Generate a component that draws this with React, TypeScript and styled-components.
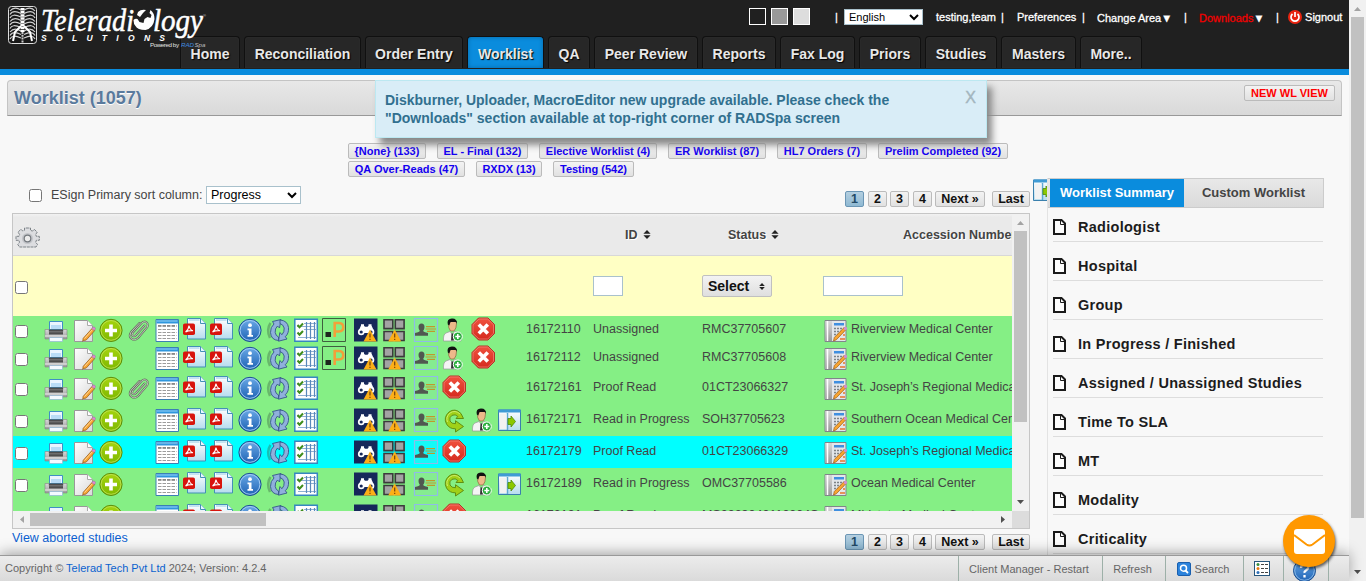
import React from 'react';
import styled, { createGlobalStyle, css } from 'styled-components';

const Global = createGlobalStyle`
  * { box-sizing: border-box; }
  html, body { margin: 0; padding: 0; overflow: hidden; background: #f8f8f8; }
  body { font-family: Arial, "Liberation Sans", sans-serif; font-size: 12.5px; color: #444; }
  svg { display: block; flex: none; }
  input, select, button { font-family: inherit; margin: 0; }
`;

/* ---------- page frame ---------- */

const Frame = styled.div`
  display: flex;
  width: 1366px;
  height: 581px;
  overflow: hidden;
`;
const Page = styled.div`
  position: relative;
  display: flex;
  flex-direction: column;
  width: 1349px;
  height: 581px;
`;
const Header = styled.header`
  flex: none;
  height: 75px;
  background: #202020;
  border-bottom: 6px solid #0a8cdd;
`;
const Content = styled.main`
  flex: 1;
  min-height: 0;
  overflow: hidden;
  padding-top: 5px;
`;

/* ---------- header ---------- */

const UserBar = styled.div`
  display: flex;
  align-items: center;
  height: 36px;
  padding: 0 0 2px 749px;
  color: #fff;
  font-size: 11px;
  white-space: nowrap;
`;
const Swatch = styled.span<{ $color: string }>`
  flex: none;
  width: 17px;
  height: 17px;
  margin: 0 5px 1px 0;
  border: 1px solid #fff;
  background: ${(p) => p.$color};
`;
const BarItem = styled.span<{ $w: number; $color?: string; $down?: boolean }>`
  flex: none;
  width: ${(p) => p.$w}px;
  color: ${(p) => p.$color || '#fff'};
  -webkit-text-stroke: 0.3px currentColor;
  ${(p) => p.$down && css`padding-top: 2px;`}
`;
const White = styled.span`
  color: #fff;
`;
const LanguageSelect = styled.select`
  flex: none;
  width: 79px;
  height: 16px;
  margin-right: 13px;
  padding: 0;
  border: 1px solid #a9c1cc;
  background: #fff;
  color: #000;
  font-size: 11px;
`;
const Nav = styled.nav`
  display: flex;
  gap: 4px;
  height: 33px;
  padding-left: 180px;
`;
const NavTab = styled.a<{ $w: number; $active?: boolean }>`
  flex: none;
  width: ${(p) => p.$w}px;
  height: 32px;
  border: 1px solid #101010;
  border-bottom: 0;
  border-radius: 4px 4px 0 0;
  background: ${(p) => (p.$active ? '#0a8cdd' : '#272727')};
  box-shadow: ${(p) => (p.$active ? 'inset 0 0 4px #0567a5' : 'inset 0 0 2px #333')};
  color: #e8e8e8;
  font-size: 14px;
  font-weight: bold;
  line-height: 34px;
  text-align: center;
  text-shadow: 1px 1px 1px #000;
  white-space: nowrap;
`;
const LogoSpot = styled.div`
  position: absolute;
  left: 0;
  top: 0;
  z-index: 2;
`;

/* ---------- title, notice, filters ---------- */

const TitleBar = styled.div`
  display: flex;
  justify-content: space-between;
  width: 1335px;
  height: 36px;
  margin-left: 7px;
  padding: 0 6px;
  border: 1px solid #c4c4c4;
  border-bottom: 1px solid #999;
  border-radius: 4px 4px 0 0;
  background: linear-gradient(#e8e8e8, #d9d9d9);
`;
const Title = styled.h1`
  margin: 0;
  color: #5a7a9d;
  font-size: 18px;
  line-height: 35px;
  text-shadow: 0 1px 0 #fff;
`;
const chip = css`
  border: 1px solid #bbb;
  border-radius: 2px;
  background: linear-gradient(#f3f3f3, #e1e1e1);
  font-weight: bold;
  text-align: center;
  white-space: nowrap;
`;
const NewView = styled.a`
  ${chip}
  width: 91px;
  height: 16px;
  margin-top: 4px;
  color: #f00;
  font-size: 11px;
  line-height: 15px;
`;
const Notice = styled.div`
  position: absolute;
  left: 375px;
  top: 80px;
  z-index: 3;
  display: flex;
  justify-content: space-between;
  width: 612px;
  height: 58px;
  padding: 10px 10px 0 9px;
  border: 1px solid #bce8f1;
  background: #d9edf7;
  box-shadow: 5px 7px 7px #888;
  color: #31708f;
  font-size: 14px;
  font-weight: bold;
  line-height: 18px;
  white-space: nowrap;
`;
const CloseMark = styled.span`
  margin-top: -2px;
  color: #a3b5be;
  font-size: 16px;
  font-weight: normal;
  -webkit-text-stroke: 0.4px currentColor;
`;
const Filters = styled.div`
  display: flex;
  flex-wrap: wrap;
  align-content: flex-start;
  gap: 2px 11px;
  width: 1040px;
  height: 62px;
  padding: 27px 20px 0 348px;
`;
const FilterChip = styled.a<{ $w: number }>`
  ${chip}
  flex: none;
  width: ${(p) => p.$w}px;
  height: 16px;
  color: #1400f0;
  font-size: 11px;
  line-height: 15px;
`;

/* ---------- worklist ---------- */

const Columns = styled.div`
  display: flex;
`;
const Left = styled.section`
  flex: none;
  width: 1018px;
  margin-left: 12px;
`;
const Toolbar = styled.div`
  display: flex;
  align-items: center;
  height: 35px;
  padding-left: 17px;
  white-space: nowrap;
`;
const Check = styled.input.attrs({ type: 'checkbox' })`
  flex: none;
  width: 13px;
  height: 13px;
`;
const SortLabel = styled.span`
  width: 155px;
  margin: -2px 0 0 9px;
`;
const SortSelect = styled.select`
  width: 95px;
  height: 18px;
  margin-top: -1px;
  padding: 0;
  border: 1px solid #a9c1cc;
  background: #fff;
  color: #000;
  font-size: 12.5px;
`;
const Pager = styled.div`
  display: flex;
  margin: 5px 0 0 auto;
  ${Toolbar} & { margin-top: 7px; }
`;
const PageButton = styled.a<{ $w: number; $gap?: number; $active?: boolean }>`
  ${chip}
  width: ${(p) => p.$w}px;
  height: 16px;
  margin-left: ${(p) => p.$gap ?? 4}px;
  color: #111;
  font-size: 12.5px;
  line-height: 14px;
  ${(p) =>
    p.$active &&
    css`
      border-color: #6b96b5;
      background: linear-gradient(#b4cfe0, #8fb9d3);
      color: #224a66;
    `}
`;
const TableBox = styled.div`
  display: grid;
  grid-template-columns: 999px 17px;
  grid-template-rows: 297px 17px;
  border: 1px solid #c6c6c6;
`;
const Table = styled.div`
  overflow: hidden;
  white-space: nowrap;
`;
const HeadRow = styled.div`
  display: flex;
  align-items: center;
  height: 42px;
  padding-left: 2px;
  border-bottom: 1px solid #d8d8d8;
  background: linear-gradient(#f2f2f2, #eaeaea 8%);
  font-weight: bold;
`;
const HeadCell = styled.span<{ $w: number }>`
  flex: none;
  display: flex;
  align-items: center;
  gap: 5px;
  width: ${(p) => p.$w}px;
  text-shadow: 1px 1px 0 #fff;
`;
const GearSlot = styled.span`
  flex: none;
  width: 610px;
  padding-top: 7px;
`;
const FilterRow = styled.div`
  display: flex;
  align-items: center;
  height: 60px;
  padding-left: 2px;
  background: #ffffc4;
`;
const FilterCheck = styled(Check)`
  margin: 2px 565px 0 0;
`;
const FilterInput = styled.input<{ $w: number; $gap: number }>`
  width: ${(p) => p.$w}px;
  height: 20px;
  margin-right: ${(p) => p.$gap}px;
  border: 1px solid #a9c1cc;
  background: #fff;
`;
const SelectButton = styled.div`
  display: flex;
  align-items: center;
  justify-content: space-between;
  width: 70px;
  height: 22px;
  margin-right: 51px;
  padding: 0 6px 0 5px;
  border: 1px solid #c0c0c0;
  border-radius: 2px;
  background: linear-gradient(#f3f3f3, #dfdfdf);
  color: #111;
  font-size: 14px;
  font-weight: bold;
`;
const StudyRow = styled.div<{ $h: number; $selected?: boolean }>`
  display: grid;
  grid-template-columns:
    31px 29px 26px 28px 28px 28px 27px 28px 29px 27px 28px 32px 29px 31px 28px
    29px 26px 29px 67px 109px 122px 27px 240px;
  align-items: center;
  height: ${(p) => p.$h}px;
  background: ${(p) => (p.$selected ? '#0ff' : '#85ef85')};
`;
const RowCheck = styled(Check)`
  margin: 3px 0 0 2px;
`;
const TextCell = styled.span<{ $lift?: number }>`
  padding-bottom: ${(p) => p.$lift ?? 2}px;
`;
const Below = styled.div`
  display: flex;
  height: 26px;
`;
const AbortedLink = styled.a`
  color: #0b5fd0;
  line-height: 18px;
`;

/* ---------- scrollbars ---------- */

const PageScroll = styled.div`
  display: flex;
  flex-direction: column;
  align-items: center;
  width: 17px;
  background: #f1f1f1;
`;
const VScroll = styled.div`
  display: flex;
  flex-direction: column;
  align-items: center;
  background: #f1f1f1;
`;
const HScroll = styled.div`
  display: flex;
  align-items: center;
  background: #f1f1f1;
`;
const Corner = styled.div`
  background: #dcdcdc;
`;
const ScrollEnd = styled.span<{ $dir: 'up' | 'down' | 'left' | 'right' }>`
  flex: none;
  display: flex;
  align-items: center;
  justify-content: center;
  width: 17px;
  height: 17px;
  color: ${(p) => (p.$dir === 'up' || p.$dir === 'left' ? '#a3a3a3' : '#505050')};
  transform: rotate(${(p) => ({ up: 0, right: 90, down: 180, left: 270 })[p.$dir]}deg);
`;
const Thumb = styled.span<{ $w: number; $h: number }>`
  width: ${(p) => p.$w}px;
  height: ${(p) => p.$h}px;
  background: #c1c1c1;
`;
const Spring = styled.span`
  flex: 1;
`;

/* ---------- summary panel ---------- */

const ToggleSlot = styled.div`
  flex: none;
  width: 15px;
  height: 24px;
  margin-left: 2px;
  overflow: hidden;
`;
const Summary = styled.aside`
  width: 277px;
  border-left: 1px solid #e3e3e3;
`;
const SummaryTabs = styled.div`
  display: flex;
  height: 30px;
  padding-left: 2px;
  border: 1px solid #ccc;
  border-left: 0;
  background: linear-gradient(#e8e8e8, #dadada);
  font-size: 13px;
  font-weight: bold;
  line-height: 27px;
  text-align: center;
`;
const SummaryTab = styled.a<{ $active?: boolean }>`
  width: ${(p) => (p.$active ? 134 : 139)}px;
  color: ${(p) => (p.$active ? '#fff' : '#444')};
  background: ${(p) => (p.$active ? '#0a8cdd' : 'transparent')};
`;
const SummaryItem = styled.div`
  display: flex;
  align-items: center;
  gap: 12px;
  width: 270px;
  height: 39px;
  margin-left: 5px;
  padding: 9px 0 0 0;
  border-bottom: 1px solid #ddd;
  color: #1c1c1c;
  font-size: 14.5px;
  font-weight: bold;
  letter-spacing: 0.28px;
  white-space: nowrap;
  &:nth-child(2) { height: 34px; padding-top: 4px; }
`;

/* ---------- footer ---------- */

const Footer = styled.footer`
  position: relative;
  z-index: 2;
  flex: none;
  display: flex;
  height: 26px;
  padding-left: 5px;
  border-top: 1px solid #999;
  background: linear-gradient(#ececec, #dadada);
  box-shadow: 0 -2px 14px rgba(0, 0, 0, 0.35);
  color: #666;
  font-size: 11px;
  line-height: 24px;
  white-space: nowrap;
`;
const Copyright = styled.span`
  width: 953px;
`;
const CompanyLink = styled.a`
  color: #0b62cf;
`;
const FooterItem = styled.span<{ $w: number; $low?: boolean }>`
  display: flex;
  align-items: center;
  justify-content: center;
  gap: 4px;
  width: ${(p) => p.$w}px;
  padding: ${(p) => (p.$low ? '4px 3px 0 0' : '0 3px 0 0')};
  border-left: 1px solid #9db0a8;
`;
const MailButton = styled.div`
  position: absolute;
  left: 1283px;
  top: 515px;
  z-index: 4;
  display: flex;
  align-items: center;
  justify-content: center;
  width: 52px;
  height: 52px;
  border-radius: 50%;
  background: #ff9800;
  box-shadow: 1px 2px 3px rgba(0, 0, 0, 0.6);
`;

/* ---------- icons ---------- */

const Ico = ({ children, dx = 0, dy = 0 }: { children: React.ReactNode; dx?: number; dy?: number }) => (
  <svg width="24" height="24" viewBox={`${-dx} ${-dy} 24 24`} overflow="visible">{children}</svg>
);

const Defs = () => (
  <svg width="0" height="0" style={{ position: 'absolute' }}>
    <defs>
      <linearGradient id="blue" x2="0" y2="1"><stop offset="0" stopColor="#6aa9e6" /><stop offset="1" stopColor="#1f63b5" /></linearGradient>
      <linearGradient id="lime" x2="0" y2="1"><stop offset="0" stopColor="#a5d40f" /><stop offset="1" stopColor="#7fb800" /></linearGradient>
      <linearGradient id="red" x2="0" y2="1"><stop offset="0" stopColor="#f0523f" /><stop offset="1" stopColor="#d52a1f" /></linearGradient>
      <linearGradient id="paper" x2="1" y2="1"><stop offset="0" stopColor="#fff" /><stop offset="1" stopColor="#d9d9d9" /></linearGradient>
      <linearGradient id="ice" x2="0" y2="1"><stop offset="0" stopColor="#fff" /><stop offset="1" stopColor="#b5dcee" /></linearGradient>
      <linearGradient id="steel" x2="0" y2="1"><stop offset="0" stopColor="#d8d8d8" /><stop offset="1" stopColor="#9a9a9a" /></linearGradient>
    </defs>
  </svg>
);

const Printer = () => (
  <Ico>
    <path d="M5.500 3.500h13v8h-13z" fill="#eaf5ff" stroke="#3f8fc5" />
    <path d="M7 7h10v4H7z" fill="#b9dcf7" />
    <path d="M1 11.500h4v2h14v-2h4v9.500H1z" fill="url(#steel)" stroke="#858585" strokeWidth=".6" />
    <path d="M5 11.500h14v5H5z" fill="#4d4d4d" />
    <path d="M5 13h14v1.500H5z" fill="#6d6d6d" />
    <path d="M1 17.500h22v1H1z" fill="#eee" />
    <path d="M5.500 19.500h13v4h-13z" fill="#f4faff" stroke="#8fb6d4" strokeWidth=".7" />
  </Ico>
);
const EditPage = () => (
  <Ico>
    <path d="M1.500 2.500h13l5 5v16h-18z" fill="url(#paper)" stroke="#999" />
    <path d="M14.500 2.500v5h5" fill="#fff" stroke="#aaa" />
    <path d="M10.500 22.500l-.8.800.5-3 9-10 2.500 2.300-8.500 9.500z" fill="#f8a532" stroke="#8e5512" strokeWidth=".7" />
    <path d="M11.500 20.500l8-9" stroke="#ffd699" />
    <path d="M18.800 10.600l1.300-1.400q1-.6 1.800.2t.3 1.900l-1.200 1.300z" fill="#e28ad0" stroke="#96669a" strokeWidth=".5" />
  </Ico>
);
const Plus = () => (
  <Ico>
    <circle cx="12" cy="12.400" r="11.100" fill="url(#lime)" stroke="#5d8d0a" />
    <circle cx="12" cy="12.400" r="9.900" fill="none" stroke="#c3e35c" strokeWidth=".8" />
    <path d="M12 6.500v12M6 12.500h12" stroke="#fff" strokeWidth="3.600" />
  </Ico>
);
const clipPath = 'M17.500 7.500l-8.500 9.500q-2 2-3.300.8t.2-3.300L14.500 5q2.800-2.500 5-.8t.8 5L11.500 19.500q-3.800 3.800-7 1.300t-.6-6.500L12.500 5';
const Clip = () => (
  <Ico>
    <g fill="none" strokeLinecap="round" strokeLinejoin="round">
      <path d={clipPath} stroke="#66705f" strokeWidth="2" />
      <path d={clipPath} stroke="#c3c9c0" strokeWidth=".9" />
    </g>
  </Ico>
);
const Sheet = () => (
  <Ico>
    <path d="M1 1.500h22.500v22H1z" fill="#fff" stroke="#3a7fb4" />
    <path d="M1.500 2h21.500v3.500H1.500z" fill="#2e96dd" />
    <path d="M2 2.500h20.500v1H2z" fill="#9bd2f5" />
    <g stroke="#9c9c9c" strokeWidth="1.200" strokeDasharray="3.500 1">
      <path d="M3 8.500h18.500M3 11.500h18.500M3 14.500h18.500M3 17.500h18.500M3 20.500h18.500" />
    </g>
    <path d="M3 7.500h18.500" stroke="#555" strokeWidth=".7" strokeDasharray="3.500 1" />
  </Ico>
);
const Pdf = () => (
  <Ico>
    <path d="M4.500.500h13l5 5v15.500h-18z" fill="url(#ice)" stroke="#4390b5" />
    <path d="M17.500.500v5h5" fill="#e8f7ff" stroke="#4390b5" />
    <path d="M6 2h10.500" stroke="#8fcae6" />
    <rect x="0" y="5.500" width="12" height="11.500" rx="1.800" fill="#d8140d" />
    <path d="M2.500 14q3-2 3.500-6.500.8 4.500 4 5.200-4-.5-7.500 1.300" fill="none" stroke="#fff" strokeWidth="1.100" />
  </Ico>
);
const Info = () => (
  <Ico>
    <circle cx="12" cy="12.400" r="11.100" fill="url(#blue)" stroke="#1b4f91" />
    <circle cx="12" cy="12.400" r="9.900" fill="none" stroke="#a9d0f5" strokeWidth=".9" />
    <circle cx="12" cy="7.200" r="1.900" fill="#fff" />
    <path d="M9.500 10.500h4v6.500h1.500v1.700H9.500V17h1.300v-4.800H9.500z" fill="#fff" />
  </Ico>
);
const Sync = () => (
  <Ico>
    <path d="M3.500 5Q-1 12 3 20" stroke="#3c6343" strokeWidth="2.500" opacity=".4" fill="none" />
    <path d="M11.500 22.500Q4 22 3.500 14.500 3.300 9 7 6L5.500 3.500l8.500-2-1.500 8.500-2-2Q7.800 10.500 8.200 14.500 8.800 18 11.500 19z" fill="#8fb0dc" stroke="#34558a" strokeWidth=".9" />
    <path d="M13 2Q20.500 2.500 21.500 9.500q.5 6-3.200 9.200l1.700 2.300-8.500 2.200 1.300-8.700 2.200 2.200q2.500-2.700 2.200-6.700Q16.300 6.500 13 5.500z" fill="#8fb0dc" stroke="#34558a" strokeWidth=".9" />
  </Ico>
);
const Checklist = () => (
  <Ico>
    <path d="M.8 1.300h22.500v22H.8z" fill="#fff" stroke="#3687c0" strokeWidth="1.500" />
    <path d="M10 5.500h12M10 11.500h12M4 19.500h18M3 8.500h18" stroke="#8fb0d3" />
    <path d="M12.500 4v17M16.500 4v17M20.500 4v17" stroke="#5a88bb" strokeWidth="1.200" />
    <path d="M3.500 7l2 2.200L9 5.500M3.500 14.500l2 2.200 3.500-3.700" fill="none" stroke="#3f8d1b" strokeWidth="2" />
  </Ico>
);
const PBadge = () => (
  <Ico>
    <path d="M.500.500h23v23H.500z" fill="none" stroke="#3f5f3f" />
    <path d="M3.500 14h5.500v5H3.500z" fill="#1d261d" />
    <path d="M12.700 19V5h4.300q4.300.2 4.300 4.300T17 13.500h-4.300" fill="none" stroke="#f3a03a" strokeWidth="2.600" />
  </Ico>
);
const Warn = ({ x, y }: { x: number; y: number }) => (
  <g transform={`translate(${x} ${y})`}>
    <path d="M6.500 0L13 12H0z" fill="#fcaf17" />
    <path d="M6.500 4v4M6.500 9.300v1.200" stroke="#75420b" strokeWidth="1.200" />
  </g>
);
const Binoculars = () => (
  <Ico>
    <path d="M0 .5h23.500v23H0z" fill="#16285a" />
    <path d="M5 12l2-4.500V6.300h3v1.400l1 1h2.500l1-1V6.300h3v1.200l2 4.500-2 3H7z" fill="#fff" />
    <circle cx="7.200" cy="14" r="3.300" fill="#fff" /><circle cx="7.200" cy="14" r="1.600" fill="#16285a" />
    <circle cx="17" cy="14" r="3.300" fill="#fff" /><circle cx="17" cy="14" r="1.600" fill="#16285a" />
    <Warn x={9.500} y={11.500} />
  </Ico>
);
const Tiles = () => (
  <Ico>
    <g fill="#a3a3a3" stroke="#3b3b3b" strokeWidth="1.600">
      <path d="M1 1.800h8.800v8.800H1zM12.300 1.800h8.800v8.800h-8.800zM1 13.500h8.800v9H1zM12.300 13.500h8.800v9h-8.800z" />
    </g>
    <Warn x={5.200} y={11.500} />
  </Ico>
);
const Card = () => (
  <Ico>
    <path d="M.500.500h23v23H.500z" fill="#85dcd0" fillOpacity=".15" stroke="#8fbbe8" strokeWidth="1.200" />
    <path d="M7.500 5.500q3 0 3 3.500 0 2.500-1.300 3.700.2 1.300 4.800 2.300v2.800H1V15q4.600-1 4.800-2.300Q4.500 11.500 4.500 9q0-3.500 3-3.500z" fill="#505850" />
    <path d="M12 8.600h9M11.500 11h10.500M13 13.400h8" stroke="#bf9a2c" strokeWidth="1.200" />
  </Ico>
);
const Person = () => (
  <Ico dx={1}>
    <path d="M9 3q4-1.500 4.500 2.500 0 5-2.500 7.500H7.500Q5 10 5.500 5z" fill="#edb98a" stroke="#7b5431" strokeWidth=".6" />
    <path d="M4.800 6.500Q3.500.500 9 .500t5 5.500l-1-2H7.500l-1.200 3.500z" fill="#111" />
    <path d="M.5 23q-.5-6.500 2.500-8l4-1.500 2.500 3 2-3 3.500 1q3 1.500 3 8.500z" fill="#f4f4f4" stroke="#9a9a9a" strokeWidth=".7" />
    <path d="M8.500 15.500h1.700l.6 7H8z" fill="#333" />
    <circle cx="14.800" cy="18.500" r="4.500" fill="#2cae3e" stroke="#fff" strokeWidth="1" />
    <path d="M14.800 16v5M12.300 18.500h5" stroke="#fff" strokeWidth="1.600" />
  </Ico>
);
const Stop = () => (
  <Ico dx={0.500} dy={-1}>
    <path d="M7 1h9.500l6.500 6.500v9l-6.500 6.500H7L.5 16.500v-9z" fill="url(#red)" stroke="#b43227" />
    <path d="M7.500 2h8.700l5.800 5.800v8.500L16.200 22H7.500l-6-5.700V7.800z" fill="none" stroke="#f59187" strokeWidth=".6" />
    <path d="M7.300 7.500l9 9M16.300 7.500l-9 9" stroke="#fff" strokeWidth="3.600" />
  </Ico>
);
const Undo = () => (
  <Ico dx={1}>
    <path d="M20.500 10.500L18 5.500Q12-.5 6 4 0 9.500 3.500 16q3 5 9 4.800V24l8-5.500-8-5.800v3q-4 .3-5.500-2.700Q5.800 9.500 9 7.300q3.500-1.500 5.800 1.200l-1.800 2z" fill="#a0d018" stroke="#5a870c" strokeWidth=".9" />
    <path d="M17 6Q12 1.500 7 5 2.500 9 4.500 14" fill="none" stroke="#cbec6a" />
  </Ico>
);
const Panes = () => (
  <Ico dx={1}>
    <path d="M.500 2h22v20.500H.500z" fill="url(#ice)" stroke="#3a80ad" />
    <path d="M.500 1.500h22v3H.500z" fill="#3f9bd5" />
    <path d="M9.500 5v17" stroke="#5ea7d0" strokeWidth="1.500" />
    <path d="M2 6h6.500v15H2z" fill="#f2f2f2" />
    <path d="M10 10.500h3V8l4.500 5.500L13 19v-2.500h-3z" fill="#8cc800" stroke="#4e8c0a" strokeWidth=".8" />
  </Ico>
);
const Facility = () => (
  <Ico>
    <path d="M1 2.500h21v21H1z" fill="#e3e6ea" stroke="#80858a" />
    <path d="M1.500 3h6.500v20H1.500z" fill="url(#steel)" />
    <path d="M3.500 3v20" stroke="#fff" strokeWidth="1.500" />
    <path d="M10 5h10v2.500H10z" fill="#3f8fe0" />
    <path d="M10 10.500h10M10 13.500h10M10 16.500h6" stroke="#7d8388" strokeWidth="1.300" strokeDasharray="2 1" />
    <path d="M9.500 23l.8-3.500 10-10.200 2 2-10 10.500z" fill="#f8a532" stroke="#9e5c12" strokeWidth=".7" />
    <circle cx="21.500" cy="10.500" r="1.700" fill="#cf8fd0" />
    <path d="M16 21h5M19 17h2" stroke="#e8752d" strokeWidth="1.300" />
  </Ico>
);
const Gear = () => (
  <svg width="25" height="24" viewBox="0 0 25 24">
    <path d="M9.500 4.300V2h6v2.300l2 .8 1.700-1.800 3 2.800-1.500 2.400.6 1.800h3v4h-3l-.6 2 1.800 2.200-1.500 2.500H4.500L2.800 18.500l1.700-2.200-.6-2H1v-4h3l.6-1.800-1.600-2.400 3-2.800L7.700 5z" fill="#dcdde0" stroke="#7d8388" strokeDasharray="3 .7" />
    <circle cx="12.500" cy="12.500" r="5.500" fill="#c3c5c9" />
    <circle cx="12.500" cy="12.500" r="3.300" fill="#ececec" stroke="#74797e" strokeWidth="1.200" />
  </svg>
);
const SortMark = ({ size = 8 }: { size?: number }) => (
  <svg width={size} height={size + 1} viewBox="0 0 8 10"><path d="M4 0l4 4.200H0zM4 10L0 5.800h8z" fill="#222" /></svg>
);
const Doc = () => (
  <svg width="13" height="16" viewBox="0 0 13 16">
    <path d="M1 1h7.500L12 4.500V15H1z" fill="#fdfdfd" stroke="#1a1a1a" strokeWidth="2" />
    <path d="M7.500 1v4.500H12" fill="none" stroke="#1a1a1a" />
  </svg>
);
const Arrow = () => (
  <svg width="7" height="4" viewBox="0 0 7 4"><path d="M3.500 0L7 4H0z" fill="currentColor" /></svg>
);
const Power = () => (
  <svg width="14" height="14" viewBox="0 0 14 14">
    <circle cx="7" cy="7" r="7" fill="#e8230f" />
    <path d="M4.500 4a4 4 0 1 0 5 0M7 2v5" fill="none" stroke="#fff" strokeWidth="1.700" />
  </svg>
);

const ribs = [5, 8.5, 12, 15.500, 19, 22.500, 26, 29.500, 33];
const Logo = () => (
  <svg width="212" height="52" viewBox="0 0 212 52">
    <rect x="8.500" y="6.500" width="28" height="37" rx="3" fill="#181818" stroke="#ddd" />
    <path d="M22.500 8v24" stroke="#fff" strokeWidth="4" strokeDasharray="2.500 .6" />
    <path d="M22.500 32v11" stroke="#ccc" strokeWidth="2" strokeDasharray="2 .8" />
    <g fill="none" stroke="#d0d0d0" strokeWidth="1.200">
      {ribs.map((y, i) => (
        <path key={y} d={`M21 ${y + 5}Q${14 - (i % 3)} ${y + 1} 10 ${y + 6}M24 ${y + 5}Q${31 + (i % 3)} ${y + 1} 35 ${y + 6}`} />
      ))}
    </g>
    <path d="M21 26l-6 6-2 9M24 26l6 6 2 9" fill="none" stroke="#fff" strokeWidth="2" />
    <g fill="#fff" fontFamily="'Liberation Serif', serif" fontStyle="italic" fontSize="31.500" stroke="#fff" strokeWidth=".5">
      <text x="41" y="31" textLength="93" lengthAdjust="spacingAndGlyphs">Teleradi</text>
      <text x="153" y="31" textLength="50" lengthAdjust="spacingAndGlyphs">logy</text>
    </g>
    <circle cx="144" cy="20" r="10" fill="#202020" />
    <path d="M133.500 20q2-2 4-1l2 3 4 1 1-4 3-2 3 1 1-3-2-2 1-3q4 3 4 9-1 9-9 11-8 0-10-4-2-2-2-6zM138 12q3-3 8-2l-3 3-3 4-3-2z" fill="#fff" />
    <text x="203" y="17" fill="#ccc" fontSize="4" fontFamily="Liberation Sans">®</text>
    <text x="41" y="41" textLength="124" fill="#fff" fontFamily="Liberation Sans" fontStyle="italic" fontWeight="bold" fontSize="8.500">SOLUTIONS</text>
    <g fontFamily="Liberation Sans" fontSize="6.200">
      <text x="150" y="47" fill="#e4e4e4" textLength="29">Powered by</text>
      <text x="181" y="47" fill="#3f8be0" fontStyle="italic" textLength="13">RAD</text>
      <text x="194.500" y="47" fill="#bbb" fontStyle="italic" textLength="11">Spa</text>
    </g>
  </svg>
);

/* ---------- data ---------- */

const tabs: [string, number][] = [
  ['Home', 60], ['Reconciliation', 117], ['Order Entry', 98], ['Worklist', 77], ['QA', 42],
  ['Peer Review', 104], ['Reports', 74], ['Fax Log', 75], ['Priors', 62], ['Studies', 72],
  ['Masters', 75], ['More..', 62],
];
const filters: [string, number][] = [
  ['{None} (133)', 78], ['EL - Final (132)', 91], ['Elective Worklist (4)', 118], ['ER Worklist (87)', 98],
  ['HL7 Orders (7)', 90], ['Prelim Completed (92)', 130], ['QA Over-Reads (47)', 117], ['RXDX (13)', 66],
  ['Testing (542)', 81],
];
type Action = 'person' | 'stop' | 'undo' | 'panes';
interface Study {
  id: string; status: string; accession: string; facility: string; h: number;
  clip?: boolean; p?: boolean; selected?: boolean; actions: Action[];
}
const studies: Study[] = [
  { id: '16172110', status: 'Unassigned', accession: 'RMC37705607', facility: 'Riverview Medical Center', h: 28, clip: true, p: true, actions: ['person', 'stop'] },
  { id: '16172112', status: 'Unassigned', accession: 'RMC37705608', facility: 'Riverview Medical Center', h: 28, p: true, actions: ['person', 'stop'] },
  { id: '16172161', status: 'Proof Read', accession: '01CT23066327', facility: 'St. Joseph’s Regional Medical Center', h: 32, clip: true, actions: ['stop'] },
  { id: '16172171', status: 'Read in Progress', accession: 'SOH37705623', facility: 'Southern Ocean Medical Center', h: 32, actions: ['undo', 'person', 'panes'] },
  { id: '16172179', status: 'Proof Read', accession: '01CT23066329', facility: 'St. Joseph’s Regional Medical Center', h: 32, selected: true, actions: ['stop'] },
  { id: '16172189', status: 'Read in Progress', accession: 'OMC37705586', facility: 'Ocean Medical Center', h: 32, actions: ['undo', 'person', 'panes'] },
  { id: '16172191', status: 'Proof Read', accession: 'MS2023040112204S', facility: 'Midstate Medical Center', h: 32, actions: ['stop'] },
];
const summary = [
  'Radiologist', 'Hospital', 'Group', 'In Progress / Finished', 'Assigned / Unassigned Studies',
  'Time To SLA', 'MT', 'Modality', 'Criticality',
];

const ActionIcon = ({ kind }: { kind?: Action }) => {
  if (kind === 'person') return <Person />;
  if (kind === 'stop') return <Stop />;
  if (kind === 'undo') return <Undo />;
  if (kind === 'panes') return <Panes />;
  return <span />;
};

const Row = ({ s }: { s: Study }) => (
  <StudyRow $h={s.h} $selected={s.selected}>
    <RowCheck />
    <Printer />
    <EditPage />
    <Plus />
    {s.clip ? <Clip /> : <span />}
    <Sheet />
    <Pdf />
    <Pdf />
    <Info />
    <Sync />
    <Checklist />
    {s.p ? <PBadge /> : <span />}
    <Binoculars />
    <Tiles />
    <Card />
    <ActionIcon kind={s.actions[0]} />
    <ActionIcon kind={s.actions[1]} />
    <ActionIcon kind={s.actions[2]} />
    <TextCell>{s.id}</TextCell>
    <TextCell>{s.status}</TextCell>
    <TextCell>{s.accession}</TextCell>
    <Facility />
    <TextCell $lift={3}>{s.facility}</TextCell>
  </StudyRow>
);

const Pages = () => (
  <Pager>
    <PageButton $w={19} $active>1</PageButton>
    <PageButton $w={19}>2</PageButton>
    <PageButton $w={19} $gap={3}>3</PageButton>
    <PageButton $w={19}>4</PageButton>
    <PageButton $w={50} $gap={3}>Next »</PageButton>
    <PageButton $w={38} $gap={7}>Last</PageButton>
  </Pager>
);

export default function App() {
  return (
    <Frame>
      <Global />
      <Defs />
      <Page>
        <LogoSpot><Logo /></LogoSpot>
        <Header>
          <UserBar>
            <Swatch $color="#202020" />
            <Swatch $color="#999" />
            <Swatch $color="#ddd" />
            <BarItem $w={20} />
            <BarItem $w={9}>|</BarItem>
            <LanguageSelect><option>English</option></LanguageSelect>
            <BarItem $w={65}>testing,team</BarItem>
            <BarItem $w={16}>|</BarItem>
            <BarItem $w={65}>Preferences</BarItem>
            <BarItem $w={15}>|</BarItem>
            <BarItem $w={87} $down>Change Area▼</BarItem>
            <BarItem $w={15}>|</BarItem>
            <BarItem $w={77} $color="#f00000" $down>Downloads<White>▼</White></BarItem>
            <BarItem $w={12}>|</BarItem>
            <Power />
            <BarItem $w={44}>&nbsp;Signout</BarItem>
          </UserBar>
          <Nav>
            {tabs.map(([name, w]) => (
              <NavTab key={name} $w={w} $active={name === 'Worklist'}>{name}</NavTab>
            ))}
          </Nav>
        </Header>
        <Content>
          <TitleBar>
            <Title>Worklist (1057)</Title>
            <NewView>NEW WL VIEW</NewView>
          </TitleBar>
          <Filters>
            {filters.map(([name, w]) => <FilterChip key={name} $w={w}>{name}</FilterChip>)}
          </Filters>
          <Columns>
            <Left>
              <Toolbar>
                <Check />
                <SortLabel>ESign Primary sort column:</SortLabel>
                <SortSelect><option>Progress</option></SortSelect>
                <Pages />
              </Toolbar>
              <TableBox>
                <Table>
                  <HeadRow>
                    <GearSlot><Gear /></GearSlot>
                    <HeadCell $w={103}>ID <SortMark /></HeadCell>
                    <HeadCell $w={175}>Status <SortMark /></HeadCell>
                    <HeadCell $w={120}>Accession Number</HeadCell>
                  </HeadRow>
                  <FilterRow>
                    <FilterCheck />
                    <FilterInput $w={30} $gap={79} />
                    <SelectButton>Select <SortMark size={6} /></SelectButton>
                    <FilterInput $w={80} $gap={0} />
                  </FilterRow>
                  {studies.map((s) => <Row key={s.id} s={s} />)}
                </Table>
                <VScroll>
                  <ScrollEnd $dir="up"><Arrow /></ScrollEnd>
                  <Thumb $w={13} $h={191} />
                  <Spring />
                  <ScrollEnd $dir="down"><Arrow /></ScrollEnd>
                </VScroll>
                <HScroll>
                  <ScrollEnd $dir="left"><Arrow /></ScrollEnd>
                  <Thumb $w={236} $h={13} />
                  <Spring />
                  <ScrollEnd $dir="right"><Arrow /></ScrollEnd>
                </HScroll>
                <Corner />
              </TableBox>
              <Below>
                <AbortedLink>View aborted studies</AbortedLink>
                <Pages />
              </Below>
            </Left>
            <ToggleSlot><Panes /></ToggleSlot>
            <Summary>
              <SummaryTabs>
                <SummaryTab $active>Worklist Summary</SummaryTab>
                <SummaryTab>Custom Worklist</SummaryTab>
              </SummaryTabs>
              {summary.map((name) => (
                <SummaryItem key={name}><Doc />{name}</SummaryItem>
              ))}
            </Summary>
          </Columns>
        </Content>
        <Footer>
          <Copyright>Copyright © <CompanyLink>Telerad Tech Pvt Ltd</CompanyLink> 2024; Version: 4.2.4</Copyright>
          <FooterItem $w={144}>Client Manager - Restart</FooterItem>
          <FooterItem $w={63}>Refresh</FooterItem>
          <FooterItem $w={78}>
            <svg width="14" height="14" viewBox="0 0 14 14">
              <rect x=".5" y=".5" width="13" height="13" rx="1.500" fill="#2b83dc" stroke="#1a5fae" />
              <circle cx="6.500" cy="6.200" r="3" fill="none" stroke="#fff" strokeWidth="1.500" />
              <path d="M8.500 8.500l2.500 2.500" stroke="#fff" strokeWidth="1.800" />
            </svg>
            Search
          </FooterItem>
          <FooterItem $w={40}>
            <svg width="16" height="15" viewBox="0 0 16 15">
              <rect x=".5" y=".5" width="15" height="14" fill="#fff" stroke="#27567c" />
              <path d="M7 3.500h7M7 7.500h7M7 11.500h7" stroke="#444" strokeDasharray="3 1" />
              <circle cx="4" cy="3.500" r="1.500" fill="#388e3c" /><circle cx="4" cy="7.500" r="1.500" fill="#e57a12" /><circle cx="4" cy="11.500" r="1.500" fill="#2d6fb8" />
            </svg>
          </FooterItem>
          <FooterItem $w={45} $low>
            <svg width="23" height="23" viewBox="0 0 23 23">
              <circle cx="11.500" cy="11.500" r="11" fill="url(#blue)" stroke="#1b4f91" />
              <circle cx="11.500" cy="11.500" r="9.800" fill="none" stroke="#9cc8f0" strokeWidth=".8" />
              <path d="M8 9q0-3.500 3.700-3.500t3.500 3q0 1.500-2 2.700t-1.500 2.600M11.500 16v2.500" fill="none" stroke="#fff" strokeWidth="2.300" />
            </svg>
          </FooterItem>
          <FooterItem $w={20} />
        </Footer>
        <Notice>
          <span>
            Diskburner, Uploader, MacroEditor new upgrade available. Please check the<br />
            "Downloads" section available at top-right corner of RADSpa screen
          </span>
          <CloseMark>X</CloseMark>
        </Notice>
        <MailButton>
          <svg width="31" height="25" viewBox="0 0 31 25">
            <rect width="31" height="25" rx="3" fill="#fff" />
            <path d="M0 6l12.500 9.500q3 2 6 0L31 6" fill="none" stroke="#ff9800" strokeWidth="2" />
          </svg>
        </MailButton>
      </Page>
      <PageScroll>
        <ScrollEnd $dir="up"><Arrow /></ScrollEnd>
        <Thumb $w={13} $h={501} />
        <Spring />
        <ScrollEnd $dir="down"><Arrow /></ScrollEnd>
      </PageScroll>
    </Frame>
  );
}
